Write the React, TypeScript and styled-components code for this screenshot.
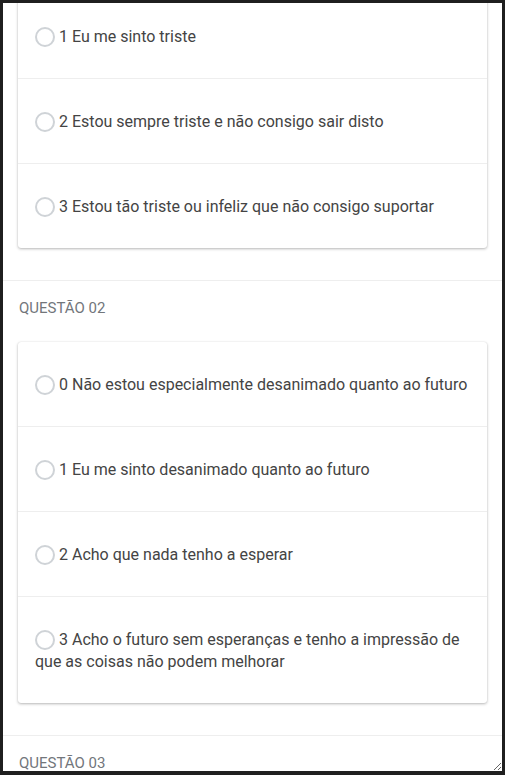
import React, { useLayoutEffect, useRef } from "react";
import styled, { createGlobalStyle } from "styled-components";

const Global = createGlobalStyle`
  html, body { margin: 0; padding: 0; background: #1f1f1f; }
  body { font-family: Roboto, "Noto Sans", Arial, sans-serif; }
  * { box-sizing: border-box; }
`;

const Frame = styled.div`
  width: 499px;
  height: 768px;
  margin: 3px 3px 4px 3px;
  background: #ffffff;
  overflow: hidden;
  resize: both;
`;

const Section = styled.section<{ $first?: boolean }>`
  padding: 16px 15px 32px 15px;
  border-top: ${(p) => (p.$first ? "none" : "1px solid #eeeeee")};
`;

const Label = styled.div`
  padding-left: 1px;
  font-size: 15px;
  line-height: 22px;
  color: #72767b;
  text-transform: uppercase;
  margin-bottom: 23px;
`;

const Card = styled.div`
  background: #fff;
  border-radius: 3px;
  box-shadow: 0 1px 3px rgba(0, 0, 0, 0.28), 0 0 1px rgba(0, 0, 0, 0.12);
`;

const Row = styled.label`
  display: block;
  padding: 32px 17px 30px 17px;
  font-size: 16px;
  line-height: 22px;
  color: #444;
  cursor: pointer;
  & + & {
    border-top: 1px solid #eeeeee;
  }
`;

const Radio = styled.span`
  display: inline-block;
  width: 20px;
  height: 20px;
  border: 2px solid #cfd3d7;
  border-radius: 50%;
  vertical-align: top;
  margin-top: 1px;
  margin-right: 4px;
`;

type Q = { title: string; options: string[] };

const questions: Q[] = [
  {
    title: "Questão 01",
    options: [
      "0 Não me sinto triste",
      "1 Eu me sinto triste",
      "2 Estou sempre triste e não consigo sair disto",
      "3 Estou tão triste ou infeliz que não consigo suportar",
    ],
  },
  {
    title: "Questão 02",
    options: [
      "0 Não estou especialmente desanimado quanto ao futuro",
      "1 Eu me sinto desanimado quanto ao futuro",
      "2 Acho que nada tenho a esperar",
      "3 Acho o futuro sem esperanças e tenho a impressão de que as coisas não podem melhorar",
    ],
  },
  {
    title: "Questão 03",
    options: [
      "0 Não me sinto um fracasso",
      "1 Acho que fracassei mais do que uma pessoa comum",
      "2 Quando olho pra trás, na minha vida, tudo o que posso ver é um monte de fracassos",
      "3 Acho que, como pessoa, sou um completo fracasso",
    ],
  },
];

export default function App() {
  const frameRef = useRef<HTMLDivElement>(null);
  const anchorRef = useRef<HTMLLabelElement>(null);

  useLayoutEffect(() => {
    const f = frameRef.current;
    const a = anchorRef.current;
    if (!f || !a) return;
    const off = a.getBoundingClientRect().top - f.getBoundingClientRect().top;
    f.scrollTop = off + 10;
  }, []);

  return (
    <>
      <Global />
      <Frame ref={frameRef}>
        {questions.map((q, qi) => (
          <Section key={q.title} $first={qi === 0}>
            <Label>{q.title}</Label>
            <Card>
              {q.options.map((o, oi) => (
                <Row key={o} ref={qi === 0 && oi === 1 ? anchorRef : undefined}>
                  <Radio />
                  {o}
                </Row>
              ))}
            </Card>
          </Section>
        ))}
      </Frame>
    </>
  );
}
